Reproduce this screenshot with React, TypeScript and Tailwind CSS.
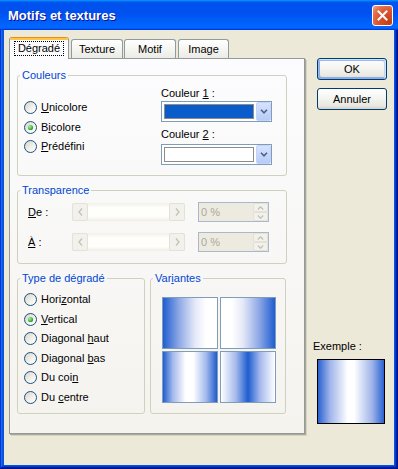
import React from 'react';

const U = ({ children }: { children: React.ReactNode }) => <span className="underline">{children}</span>;

const Radio = ({ checked, label }: { checked?: boolean; label: React.ReactNode }) => (
  <div className="flex h-[19.5px] items-center gap-[4px]">
    <svg width="13" height="13" viewBox="0 0 13 13" className="shrink-0">
      <defs>
        <linearGradient id="xpRadio" x1="0" y1="0" x2="1" y2="1">
          <stop offset="0" stopColor="#D4D1C5" />
          <stop offset="0.6" stopColor="#F4F3EE" />
          <stop offset="1" stopColor="#FFFFFF" />
        </linearGradient>
        <radialGradient id="xpDot" cx="0.35" cy="0.35" r="0.7">
          <stop offset="0" stopColor="#A8F0A4" />
          <stop offset="1" stopColor="#1E9A1E" />
        </radialGradient>
      </defs>
      <circle cx="6.5" cy="6.5" r="6" fill="url(#xpRadio)" stroke="#1C5180" />
      {checked && <circle cx="6.5" cy="6.5" r="2.6" fill="url(#xpDot)" />}
    </svg>
    <span>{label}</span>
  </div>
);

const Combo = ({ swatch }: { swatch: string }) => (
  <div className="flex h-[21px] w-[111px] border border-[#7F9DB9] bg-white">
    <div className="flex-1 p-[2px]">
      <div className={`h-full border border-[#8C8C8C] ${swatch}`} />
    </div>
    <div className="flex w-[15px] items-center justify-center rounded-[2px] border border-[#C3D3FD] bg-[linear-gradient(180deg,#D6E3FE,#B7CBF7)]">
      <svg width="8" height="5" viewBox="0 0 8 5">
        <path d="M1 0.8 L4 3.8 L7 0.8" fill="none" stroke="#4D6185" strokeWidth="1.6" />
      </svg>
    </div>
  </div>
);

const ScrollBtn = ({ left }: { left?: boolean }) => (
  <div className="flex h-full w-[16px] items-center justify-center rounded-[2px] border border-[#E4E2D8] bg-[#F2F1EB]">
    <svg width="5" height="8" viewBox="0 0 5 8">
      <path d={left ? 'M4 0.5 L1 4 L4 7.5' : 'M1 0.5 L4 4 L1 7.5'} fill="none" stroke="#C4C2B6" strokeWidth="1.3" />
    </svg>
  </div>
);

const Scroll = () => (
  <div className="flex h-[18px] w-[113px] bg-[linear-gradient(180deg,#F1EFE8,#FEFEFB_25%,#FEFEFB_75%,#EFEDE5)]">
    <ScrollBtn left />
    <div className="flex-1" />
    <ScrollBtn />
  </div>
);

const SpinBtn = ({ up }: { up?: boolean }) => (
  <div className="flex flex-1 items-center justify-center rounded-[2px] border border-[#E4E2D8] bg-[#F2F1EB]">
    <svg width="7" height="4" viewBox="0 0 7 4">
      <path d={up ? 'M0.8 3.5 L3.5 0.8 L6.2 3.5' : 'M0.8 0.5 L3.5 3.2 L6.2 0.5'} fill="none" stroke="#C4C2B6" strokeWidth="1.3" />
    </svg>
  </div>
);

const Spin = () => (
  <div className="flex h-[20px] w-[71px] border border-[#A9B8CB] bg-[#EDEBE0]">
    <div className="flex-1 pl-[2px] leading-[18px] text-[#ACA899]">0 %</div>
    <div className="flex w-[15px] flex-col">
      <SpinBtn up />
      <SpinBtn />
    </div>
  </div>
);

const Button = ({ children, isDefault, className }: { children: React.ReactNode; isDefault?: boolean; className?: string }) => (
  <div
    className={`flex h-[22px] w-[70px] items-center justify-center rounded-[3px] border border-[#003C74] bg-[linear-gradient(180deg,#FFFFFF,#F3F3EF_50%,#E8E7E0_85%,#D6D0C5)] ${
      isDefault
        ? 'shadow-[inset_-1px_1px_#CEE7FF,inset_1px_2px_#98B8EA,inset_-2px_2px_#BCD4F6,inset_1px_-1px_#89ADE4,inset_2px_-2px_#89ADE4]'
        : ''
    } ${className ?? ''}`}
  >
    {children}
  </div>
);

const Legend = ({ children }: { children: React.ReactNode }) => (
  <legend className="px-[2px] leading-[13px] text-[#0046D5]">{children}</legend>
);

export default function App() {
  return (
    <div className="flex h-[469px] w-[398px] flex-col bg-[#0855DD] font-['Liberation_Sans',Arial,sans-serif] text-[11px] leading-[13px] text-black shadow-[inset_-1px_-1px_#00138C,inset_1px_1px_#0831D9,inset_-2px_-2px_#001EA0,inset_2px_2px_#166AEE,inset_-3px_-3px_#003BDA,inset_3px_3px_#0855DD]">
      {/* Title bar */}
      <div className="flex h-[30px] shrink-0 items-center justify-between bg-[linear-gradient(180deg,#0997FF,#0053EE_8%,#0050EE_40%,#0066FF_88%,#0066FF_93%,#005BFF_95%,#003DD7_96%,#003DD7)] pl-[8px] pr-[5px]">
        <span className="text-[13px] font-bold text-white [text-shadow:1px_1px_0_#0F1089]">Motifs et textures</span>
        <div className="mt-[1px] flex h-[21px] w-[21px] items-center justify-center rounded-[3px] border border-white bg-[radial-gradient(circle_at_85%_85%,#C43E12_0%,#DD5430_50%,#E2714F_75%,#F0A88E_100%)]">
          <svg width="11" height="11" viewBox="0 0 11 11">
            <path d="M1.5 1.5 L9.5 9.5 M9.5 1.5 L1.5 9.5" stroke="white" strokeWidth="2" strokeLinecap="square" />
          </svg>
        </div>
      </div>

      <div className="mx-[4px] mb-[4px] flex flex-1 bg-[#ECE9D8]">
        {/* Tabs + panel */}
        <div className="flex flex-col pl-[5px] pt-[7px]">
          <div className="flex h-[21px] items-end">
            <div className="relative z-10 mb-[-1px] h-[22px] w-[60px] rounded-t-[3px] border-x border-t border-x-[#919B9C] border-t-[#E68B2C] bg-[#FCFCFE]">
              <div className="flex h-full flex-col items-center rounded-t-[2px] border-t-2 border-[#FFC73C]">
                <div className="mt-[1px] border border-dotted border-black px-[3px]">Dégradé</div>
              </div>
            </div>
            <div className="ml-[2px] flex h-[19px] w-[52px] justify-center rounded-t-[3px] border-x border-t border-[#919B9C] bg-[linear-gradient(180deg,#FFFFFF,#F3F3EF_60%,#ECEBE6)] pt-[3px]">Texture</div>
            <div className="ml-[1px] flex h-[19px] w-[52px] justify-center rounded-t-[3px] border-x border-t border-[#919B9C] bg-[linear-gradient(180deg,#FFFFFF,#F3F3EF_60%,#ECEBE6)] pt-[3px]">Motif</div>
            <div className="ml-[2px] flex h-[19px] w-[51px] justify-center rounded-t-[3px] border-x border-t border-[#919B9C] bg-[linear-gradient(180deg,#FFFFFF,#F3F3EF_60%,#ECEBE6)] pt-[3px]">Image</div>
          </div>

          <div className="h-[376px] w-[296px] border border-[#919B9C] bg-[linear-gradient(180deg,#FCFCFE,#F4F3EE)] px-[7px] pt-[10px] shadow-[1px_1px_0_#ACA899,2px_2px_0_#D6D3C2]">
            {/* Couleurs */}
            <fieldset className="h-[107px] w-[270px] rounded-[3px] border border-[#D0D0BF] pl-[2px]">
              <Legend>Couleurs</Legend>
              <div className="flex">
                <div className="mt-[16px] w-[141px] pl-[4px]">
                  <Radio label={<><U>U</U>nicolore</>} />
                  <Radio checked label={<>B<U>i</U>colore</>} />
                  <Radio label={<><U>P</U>rédéfini</>} />
                </div>
                <div className="flex flex-col">
                  <div className="mt-[5px]">Couleur <U>1</U> :</div>
                  <div className="mt-[1px]"><Combo swatch="bg-[#0B5CCB]" /></div>
                  <div className="mt-[6px]">Couleur <U>2</U> :</div>
                  <div className="mt-[3px]"><Combo swatch="bg-white" /></div>
                </div>
              </div>
            </fieldset>

            {/* Transparence */}
            <fieldset className="mt-[8px] h-[80px] w-[270px] rounded-[3px] border border-[#D0D0BF] pl-[2px]">
              <Legend>Transparence</Legend>
              <div className="mt-[5px] flex flex-col gap-[10px] pl-[8px]">
                <div className="flex h-[20px] items-center">
                  <span className="w-[44px]"><U>D</U>e :</span>
                  <Scroll />
                  <div className="ml-[13px]"><Spin /></div>
                </div>
                <div className="flex h-[20px] items-center">
                  <span className="w-[44px]"><U>À</U> :</span>
                  <Scroll />
                  <div className="ml-[13px]"><Spin /></div>
                </div>
              </div>
            </fieldset>

            <div className="mt-[8px] flex gap-[5px]">
              {/* Type de dégradé */}
              <fieldset className="h-[142px] w-[128px] rounded-[3px] border border-[#D0D0BF] pl-[2px]">
                <Legend>Type de dégradé</Legend>
                <div className="mt-[5px] pl-[4px]">
                  <Radio label={<>Hori<U>z</U>ontal</>} />
                  <Radio checked label={<><U>V</U>ertical</>} />
                  <Radio label={<>Diagonal <U>h</U>aut</>} />
                  <Radio label={<>Diagonal <U>b</U>as</>} />
                  <Radio label={<>Du coi<U>n</U></>} />
                  <Radio label={<>Du <U>c</U>entre</>} />
                </div>
              </fieldset>

              {/* Variantes */}
              <fieldset className="h-[142px] w-[136px] rounded-[3px] border border-[#D0D0BF] pl-[2px]">
                <Legend>Var<U>i</U>antes</Legend>
                <div className="grid grid-cols-[56px_56px] gap-[2px] pl-[9px] pt-[12px]">
                  <div className="h-[52px] border border-[#7F9DB9] bg-[linear-gradient(90deg,#1F5DD0_0%,#8FA9E6_30%,#E6EAF8_60%,#FFFFFF_80%)]" />
                  <div className="h-[52px] border border-[#7F9DB9] bg-[linear-gradient(270deg,#1F5DD0_0%,#8FA9E6_30%,#E6EAF8_60%,#FFFFFF_80%)]" />
                  <div className="h-[52px] border border-[#7F9DB9] bg-[linear-gradient(90deg,#1F5DD0_0%,#A3B8EC_18%,#FFFFFF_42%,#FFFFFF_56%,#A3B8EC_80%,#1F5DD0_100%)]" />
                  <div className="h-[52px] border border-[#7F9DB9] bg-[linear-gradient(90deg,#FFFFFF_0%,#A3B8EC_28%,#1F5DD0_50%,#A3B8EC_72%,#FFFFFF_100%)]" />
                </div>
              </fieldset>
            </div>
          </div>
        </div>

        {/* Right column */}
        <div className="flex flex-col pl-[12px] pt-[28px]">
          <Button isDefault>OK</Button>
          <Button className="mt-[8px]">Annuler</Button>
          <div className="ml-[-4px] mt-[230px]">Exemple :</div>
          <div className="mt-[6px] h-[65px] w-[68px] border border-black bg-[linear-gradient(90deg,#2A62D1_0%,#9FB4EA_18%,#FFFFFF_45%,#FFFFFF_55%,#9FB4EA_82%,#2A62D1_100%)]" />
        </div>
      </div>
    </div>
  );
}
